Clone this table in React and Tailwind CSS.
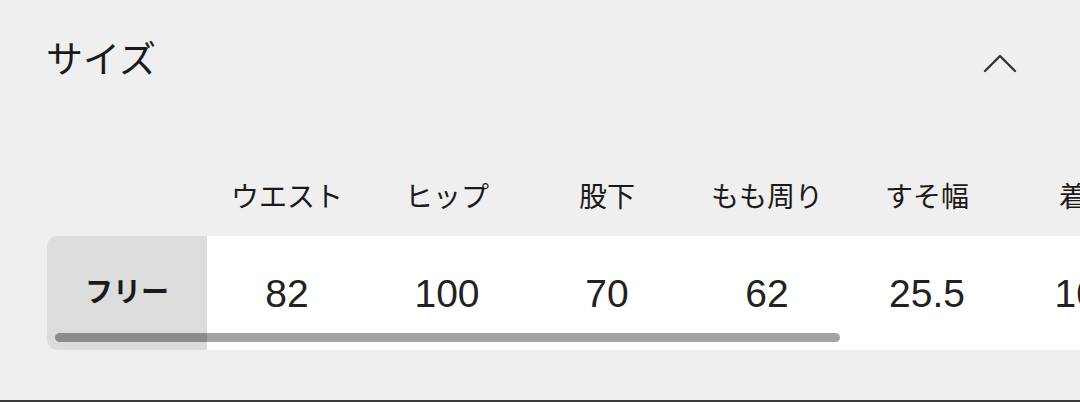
import React from 'react';

const columns = [
    { label: 'ウエスト', value: '82' },
    { label: 'ヒップ', value: '100' },
    { label: '股下', value: '70' },
    { label: 'もも周り', value: '62' },
    { label: 'すそ幅', value: '25.5' },
    { label: '着丈', value: '102' },
];

const font = { fontFamily: '"Liberation Sans", "Noto Sans CJK JP", sans-serif' };

const App = () => {
    return (
        <div
            className="w-[1080px] h-[402px] bg-[#efefef] overflow-hidden border-b-2 border-[#3a3a3a] flex flex-col text-[#1a1a1a]"
            style={font}
        >
            {/* section header */}
            <div className="h-[120px] shrink-0 flex items-center justify-between pl-[46px] pr-[63px]">
                <h2 className="text-[37px] leading-none font-normal">サイズ</h2>
                <svg width="34" height="20" viewBox="0 0 34 20" className="mt-[6px]">
                    <path d="M2 18 L17 3 L32 18" fill="none" stroke="#333" strokeWidth="2.4" strokeLinecap="round" strokeLinejoin="round" />
                </svg>
            </div>

            {/* size table */}
            <div className="pl-[47px] overflow-hidden">
                <div className="flex w-max h-[116px] items-end pb-[24px]">
                    <div className="w-[160px]" />
                    {columns.map((c) => (
                        <div key={c.label} className="w-[160px] text-center text-[28px] leading-none whitespace-nowrap">
                            {c.label}
                        </div>
                    ))}
                </div>

                <div className="relative flex w-max h-[114px]">
                    <div className="w-[160px] bg-[#dcdcdc] rounded-l-[10px] flex items-center justify-center text-[28px] font-bold">
                        フリー
                    </div>
                    {columns.map((c) => (
                        <div key={c.label} className="w-[160px] bg-white flex items-center justify-center text-[39px] leading-none text-[#222]">
                            {c.value}
                        </div>
                    ))}
                    {/* horizontal scroll thumb */}
                    <div className="absolute left-[8px] bottom-[8px] w-[785px] h-[9px] rounded-full bg-black/[0.36]" />
                </div>
            </div>
        </div>
    );
};

export default App;
